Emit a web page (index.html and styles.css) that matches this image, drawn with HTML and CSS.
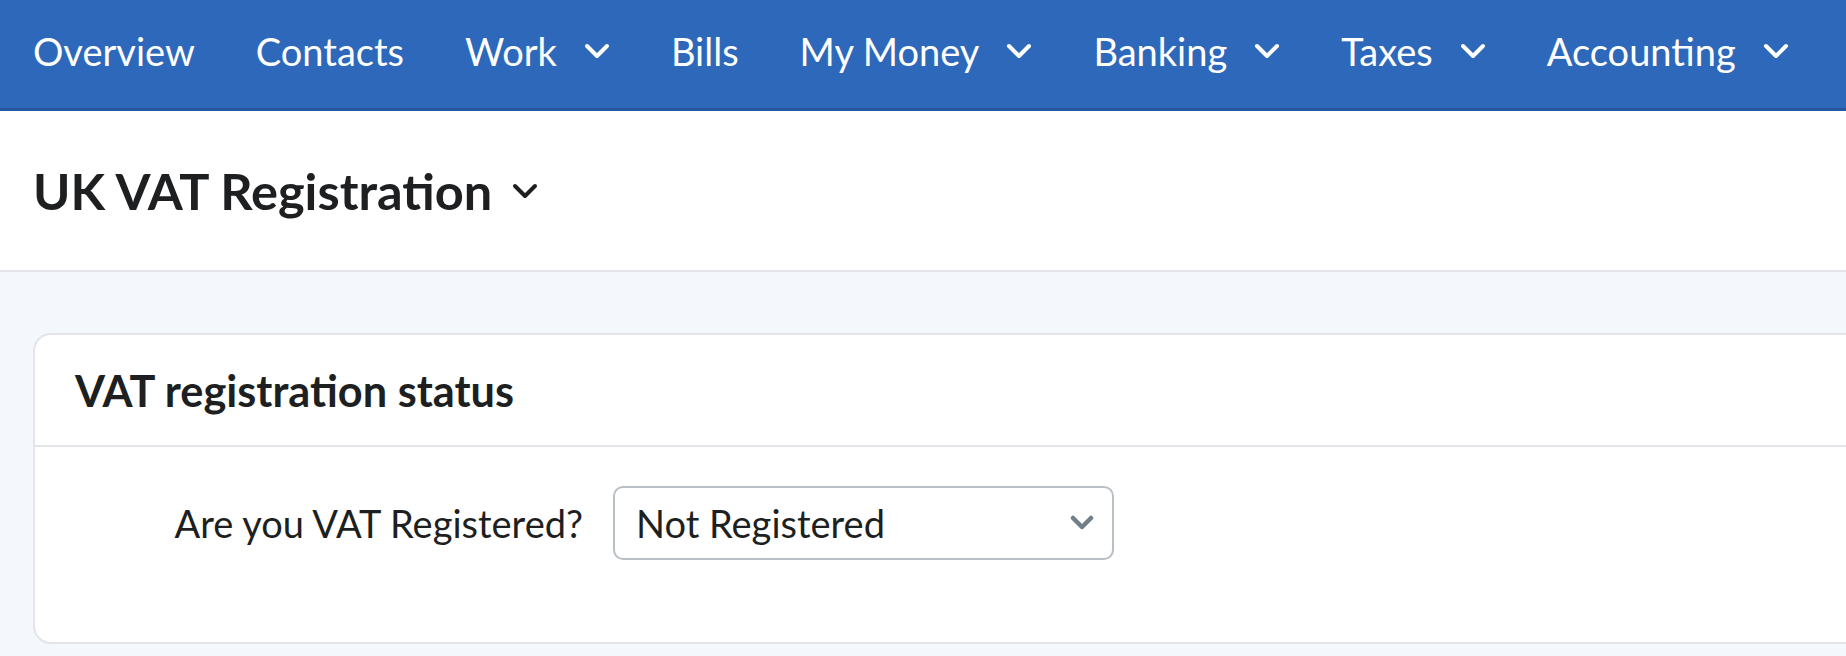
FILE: index.html
```html
<!DOCTYPE html>
<html lang="en">
<head>
<meta charset="utf-8">
<title>UK VAT Registration</title>
<link rel="stylesheet" href="styles.css">
</head>
<body>
<nav class="nav">
  <a class="nav-item">Overview</a>
  <a class="nav-item">Contacts</a>
  <a class="nav-item">Work<svg class="nav-chev" viewBox="0 0 26 16"><path d="M3 3 L13 13 L23 3"/></svg></a>
  <a class="nav-item">Bills</a>
  <a class="nav-item">My Money<svg class="nav-chev" viewBox="0 0 26 16"><path d="M3 3 L13 13 L23 3"/></svg></a>
  <a class="nav-item">Banking<svg class="nav-chev" viewBox="0 0 26 16"><path d="M3 3 L13 13 L23 3"/></svg></a>
  <a class="nav-item">Taxes<svg class="nav-chev" viewBox="0 0 26 16"><path d="M3 3 L13 13 L23 3"/></svg></a>
  <a class="nav-item">Accounting<svg class="nav-chev" viewBox="0 0 26 16"><path d="M3 3 L13 13 L23 3"/></svg></a>
</nav>
<header class="page-header">
  <h1 class="page-title">UK VAT Registration<svg class="title-chev" viewBox="0 0 26 16"><path d="M3 3 L13 13 L23 3"/></svg></h1>
</header>
<main class="content">
  <section class="card">
    <div class="card-head">
      <h2 class="card-title">VAT registration status</h2>
    </div>
    <div class="card-body">
      <div class="form-row">
        <label class="form-label">Are you VAT Registered?</label>
        <div class="select">
          <span class="select-value">Not Registered</span>
          <svg class="select-chev" viewBox="0 0 24 16"><path d="M3 3 L12 12 L21 3"/></svg>
        </div>
      </div>
    </div>
  </section>
</main>
</body>
</html>
```
FILE: styles.css
```css
* { box-sizing: border-box; }
html, body { margin: 0; padding: 0; }
body {
  width: 1846px;
  height: 656px;
  overflow: hidden;
  background: #f4f7fc;
  font-family: Lato, "Liberation Sans", sans-serif;
  color: #1e1f21;
}
.nav {
  height: 111px;
  background: #2e68bb;
  border-bottom: 3px solid #2656a0;
  display: flex;
  align-items: center;
  padding: 0 0 6px 33px;
  gap: 61px;
  white-space: nowrap;
}
.nav-item {
  color: #ffffff;
  font-size: 38px;
  display: flex;
  align-items: center;
}
.nav-chev {
  width: 26px;
  height: 16px;
  margin-left: 27px;
  fill: none;
  stroke: #ffffff;
  stroke-width: 4;
  stroke-linecap: round;
  stroke-linejoin: round;
}
.page-header {
  background: #ffffff;
  height: 161px;
  border-bottom: 2px solid #e3e5ea;
  display: flex;
  align-items: center;
  padding-left: 33px;
}
.page-title {
  margin: 0;
  font-size: 50.5px;
  font-weight: 700;
  display: flex;
  align-items: center;
}
.title-chev {
  width: 26px;
  height: 16px;
  margin-left: 20px;
  fill: none;
  stroke: #1e1f21;
  stroke-width: 4;
  stroke-linecap: round;
  stroke-linejoin: round;
}
.content {
  padding: 61px 0 0 33px;
}
.card {
  background: #ffffff;
  border: 2px solid #e3e5ea;
  border-radius: 18px;
  margin-right: -60px;
  height: 311px;
}
.card-head {
  height: 112px;
  border-bottom: 2px solid #e3e5ea;
  display: flex;
  align-items: center;
  padding-left: 40px;
}
.card-title {
  margin: 0;
  font-size: 43.3px;
  font-weight: 700;
}
.card-body {
  padding-top: 39px;
}
.form-row {
  display: grid;
  grid-template-columns: 548px 501px;
  column-gap: 30px;
  align-items: center;
}
.form-label {
  text-align: right;
  font-size: 38px;
}
.select {
  height: 74px;
  border: 2px solid #b8bfc5;
  border-radius: 10px;
  display: flex;
  align-items: center;
  justify-content: space-between;
  padding: 0 18px 0 21px;
  background: #ffffff;
}
.select-value {
  font-size: 38px;
}
.select-chev {
  width: 24px;
  height: 16px;
  fill: none;
  stroke: #737f88;
  stroke-width: 4.5;
  stroke-linecap: round;
  stroke-linejoin: round;
}
```
